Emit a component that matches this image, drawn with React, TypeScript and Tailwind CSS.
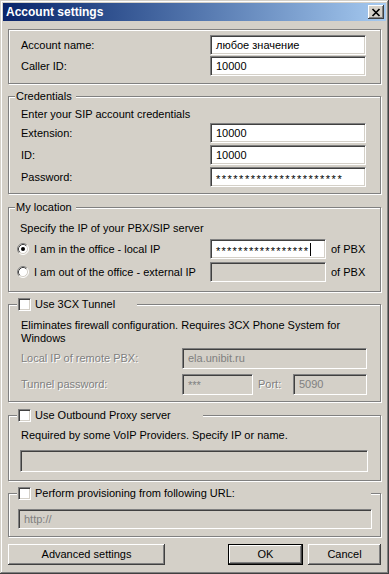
const sunken =
  'border border-t-[#808080] border-l-[#808080] border-b-white border-r-white shadow-[inset_1px_1px_0_#404040,inset_-1px_-1px_0_#d4d0c8]'

const raised =
  'shadow-[inset_-1px_-1px_0_#404040,inset_1px_1px_0_#fff,inset_-2px_-2px_0_#808080,inset_2px_2px_0_#d4d0c8]'

const dim = 'text-[#808080] [text-shadow:1px_1px_0_#fff]'

function Field({
  className = '',
  disabled = false,
  children,
}: {
  className?: string
  disabled?: boolean
  children?: React.ReactNode
}) {
  return (
    <div
      className={`${sunken} flex shrink-0 items-center overflow-hidden whitespace-nowrap pl-[5px] ${
        disabled ? 'bg-[#d4d0c8] text-[#808080]' : 'bg-white text-black'
      } ${className}`}
    >
      {children}
    </div>
  )
}

function Group({
  legend,
  legendClass = '',
  className = '',
  children,
}: {
  legend?: React.ReactNode
  legendClass?: string
  className?: string
  children: React.ReactNode
}) {
  return (
    <fieldset
      className={`min-w-0 border border-[#808080] shadow-[1px_1px_0_#fff,inset_1px_1px_0_#fff] ${className}`}
    >
      {legend && (
        <legend className={`flex items-center bg-[#d4d0c8] leading-[13px] ${legendClass}`}>
          {legend}
        </legend>
      )}
      {children}
    </fieldset>
  )
}

function Check({ label }: { label: string }) {
  return (
    <>
      <span className={`${sunken} inline-block h-[13px] w-[13px] shrink-0 bg-white`} />
      <span className="ml-[4px]">{label}</span>
    </>
  )
}

function Radio({ checked }: { checked?: boolean }) {
  return (
    <svg width="12" height="12" viewBox="0 0 12 12" className="shrink-0">
      <circle cx="6" cy="6" r="5" fill="#fff" />
      <path d="M2.11 9.89 A5.5 5.5 0 0 1 9.89 2.11" fill="none" stroke="#808080" />
      <path d="M9.89 2.11 A5.5 5.5 0 0 1 2.11 9.89" fill="none" stroke="#fff" />
      <path d="M2.82 9.18 A4.5 4.5 0 0 1 9.18 2.82" fill="none" stroke="#404040" />
      <path d="M9.18 2.82 A4.5 4.5 0 0 1 2.82 9.18" fill="none" stroke="#d4d0c8" />
      {checked && <circle cx="6" cy="6" r="2" fill="#000" />}
    </svg>
  )
}

function Button({ children, className = '', isDefault = false }: { children: string; className?: string; isDefault?: boolean }) {
  return (
    <div
      className={`flex h-[21px] shrink-0 items-center justify-center bg-[#d4d0c8] ${
        isDefault ? 'border border-black' : ''
      } ${raised} ${className}`}
    >
      {children}
    </div>
  )
}

export default function App() {
  return (
    <div className="h-[574px] w-[389px] bg-[#d4d0c8] p-[3px] font-['Liberation_Sans',Arial,sans-serif] text-[11px] leading-[13px] text-black shadow-[inset_-1px_-1px_0_#404040,inset_1px_1px_0_#d4d0c8,inset_-2px_-2px_0_#808080,inset_2px_2px_0_#fff]">
      <div className="flex h-[18px] items-center justify-between bg-gradient-to-r from-[#0a246a] to-[#a6caf0] pl-[3px] pr-[2px]">
        <span className="text-[12px] font-bold text-white">Account settings</span>
        <div className={`flex h-[14px] w-[16px] items-center justify-center bg-[#d4d0c8] ${raised}`}>
          <svg width="10" height="9" viewBox="0 0 10 9">
            <path d="M1.5 1 L8.5 8 M8.5 1 L1.5 8" stroke="#000" strokeWidth="1.7" />
          </svg>
        </div>
      </div>

      <div className="flex flex-col px-[5px]">
        <Group className="mt-[8px] pb-[7px] pl-[12px] pt-[5px]">
          <div className="flex flex-col gap-[1px]">
            <div className="flex items-center">
              <span className="w-[189px]">Account name:</span>
              <Field className="h-[20px] w-[156px]">любое значение</Field>
            </div>
            <div className="flex items-center">
              <span className="w-[189px]">Caller ID:</span>
              <Field className="h-[20px] w-[156px]">10000</Field>
            </div>
          </div>
        </Group>

        <Group
          className="mt-[6px] pb-[6px] pl-[12px]"
          legend="Credentials"
          legendClass="ml-[-6px] pl-[1px] pr-[4px]"
        >
          <div className="pt-[5px]">Enter your SIP account credentials</div>
          <div className="mt-[2px] flex flex-col gap-[2px]">
            <div className="flex items-center">
              <span className="w-[189px]">Extension:</span>
              <Field className="h-[20px] w-[156px]">10000</Field>
            </div>
            <div className="flex items-center">
              <span className="w-[189px]">ID:</span>
              <Field className="h-[20px] w-[156px]">10000</Field>
            </div>
            <div className="flex items-center">
              <span className="w-[189px]">Password:</span>
              <Field className="h-[20px] w-[156px]">
                <span className="translate-y-[2px] tracking-[1.5px]">**********************</span>
              </Field>
            </div>
          </div>
        </Group>

        <Group
          className="mt-[7px] pb-[9px] pl-[8px]"
          legend="My location"
          legendClass="ml-[-2px] pl-[1px] pr-[4px]"
        >
          <div className="pl-[3px] pt-[8px]">Specify the IP of your PBX/SIP server</div>
          <div className="mt-[4px] flex items-center">
            <div className="flex w-[193px] items-center">
              <Radio checked />
              <span className="ml-[5px]">I am in the office - local IP</span>
            </div>
            <Field className="h-[20px] w-[116px]">
              <span className="translate-y-[2px] tracking-[1.2px]">*****************</span>
              <span className="ml-[1px] h-[13px] w-[1px] bg-black" />
            </Field>
            <span className="ml-[5px]">of PBX</span>
          </div>
          <div className="mt-[3px] flex items-center">
            <div className="flex w-[193px] items-center">
              <Radio />
              <span className="ml-[5px]">I am out of the office - external IP</span>
            </div>
            <Field disabled className="h-[20px] w-[116px]" />
            <span className="ml-[5px]">of PBX</span>
          </div>
        </Group>

        <Group
          className="mt-[6px] pb-[6px] pl-[12px]"
          legend={<Check label="Use 3CX Tunnel" />}
          legendClass="ml-[-4px] w-[120px] pl-[1px]"
        >
          <div className="pt-[8px]">
            Eliminates firewall configuration. Requires 3CX Phone System for
            <br />
            Windows
          </div>
          <div className="mt-[3px] flex items-center">
            <span className={`w-[161px] ${dim}`}>Local IP of remote PBX:</span>
            <Field disabled className="h-[21px] w-[185px]">
              ela.unibit.ru
            </Field>
          </div>
          <div className="mt-[5px] flex items-center">
            <span className={`w-[161px] ${dim}`}>Tunnel password:</span>
            <Field disabled className="h-[21px] w-[71px]">
              <span className="translate-y-[1px]">***</span>
            </Field>
            <span className={`ml-[5px] w-[35px] ${dim}`}>Port:</span>
            <Field disabled className="h-[21px] w-[74px]">
              5090
            </Field>
          </div>
        </Group>

        <Group
          className="mt-[7px] pb-[8px] pl-[11px]"
          legend={<Check label="Use Outbound Proxy server" />}
          legendClass="ml-[-3px] w-[186px] pl-[1px]"
        >
          <div className="pl-[1px] pt-[7px]">Required by some VoIP Providers. Specify IP or name.</div>
          <Field disabled className="mt-[8px] h-[22px] w-[348px]" />
        </Group>

        <Group
          className="mt-[6px] pb-[7px] pl-[9px]"
          legend={<Check label="Perform provisioning from following URL:" />}
          legendClass="ml-[-1px] w-[354px] pl-[1px]"
        >
          <Field disabled className="mt-[9px] h-[20px] w-[354px]">
            http://
          </Field>
        </Group>

        <div className="mt-[7px] flex items-center">
          <Button className="w-[157px]">Advanced settings</Button>
          <div className="flex-1" />
          <Button isDefault className="w-[75px]">
            OK
          </Button>
          <Button className="ml-[5px] w-[73px]">Cancel</Button>
        </div>
      </div>
    </div>
  )
}
